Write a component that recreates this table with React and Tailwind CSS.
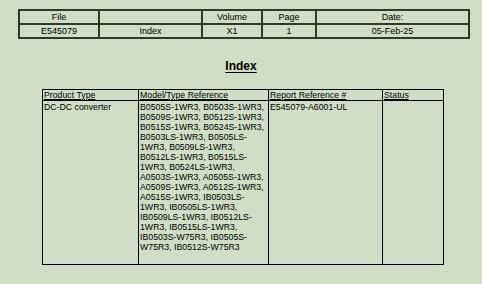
import React from "react";

const models = [
  "B0505S-1WR3", "B0503S-1WR3", "B0509S-1WR3", "B0512S-1WR3", "B0515S-1WR3",
  "B0524S-1WR3", "B0503LS-1WR3", "B0505LS-1WR3", "B0509LS-1WR3", "B0512LS-1WR3",
  "B0515LS-1WR3", "B0524LS-1WR3", "A0503S-1WR3", "A0505S-1WR3", "A0509S-1WR3",
  "A0512S-1WR3", "A0515S-1WR3", "IB0503LS-1WR3", "IB0505LS-1WR3", "IB0509LS-1WR3",
  "IB0512LS-1WR3", "IB0515LS-1WR3", "IB0503S-W75R3", "IB0505S-W75R3", "IB0512S-W75R3",
];

const font = { fontFamily: '"Liberation Sans", Arial, sans-serif' };

export default function App() {
  return (
    <div
      className="w-[482px] h-[284px] bg-[#cfdec4] text-black overflow-hidden pt-[9px]"
      style={font}
    >
      {/* Header block */}
      <table className="ml-[18px] w-[450px] table-fixed border-collapse text-[9px] leading-[12px] text-center">
        <colgroup>
          <col className="w-[80px]" />
          <col className="w-[103px]" />
          <col className="w-[60px]" />
          <col className="w-[54px]" />
          <col className="w-[153px]" />
        </colgroup>
        <tbody>
          <tr className="h-[14px]">
            <td className="border-2 border-[#2f3a2c] p-0">File</td>
            <td className="border-2 border-[#2f3a2c] p-0"></td>
            <td className="border-2 border-[#2f3a2c] p-0">Volume</td>
            <td className="border-2 border-[#2f3a2c] p-0">Page</td>
            <td className="border-2 border-[#2f3a2c] p-0">Date:</td>
          </tr>
          <tr className="h-[14px]">
            <td className="border-2 border-[#2f3a2c] p-0">E545079</td>
            <td className="border-2 border-[#2f3a2c] p-0">Index</td>
            <td className="border-2 border-[#2f3a2c] p-0">X1</td>
            <td className="border-2 border-[#2f3a2c] p-0">1</td>
            <td className="border-2 border-[#2f3a2c] p-0">05-Feb-25</td>
          </tr>
        </tbody>
      </table>

      <div className="mt-[20px] text-center text-[12px] leading-[14px] font-bold underline underline-offset-2">
        Index
      </div>

      {/* Index table */}
      <table className="mt-[16px] ml-[42px] w-[401px] table-fixed border-collapse text-[8.75px] leading-[10px] text-left align-top">
        <colgroup>
          <col className="w-[96px]" />
          <col className="w-[130px]" />
          <col className="w-[114px]" />
          <col className="w-[61px]" />
        </colgroup>
        <thead>
          <tr className="h-[11px]">
            <th className="border-[1.5px] border-black font-normal underline px-px py-0">Product Type</th>
            <th className="border-[1.5px] border-black font-normal underline px-px py-0">Model/Type Reference</th>
            <th className="border-[1.5px] border-black font-normal underline px-px py-0">Report Reference #</th>
            <th className="border-[1.5px] border-black font-normal underline px-px py-0">Status</th>
          </tr>
        </thead>
        <tbody>
          <tr className="h-[164px]">
            <td className="border-[1.5px] border-black align-top px-px pt-px">DC-DC converter</td>
            <td className="border-[1.5px] border-black align-top px-px pt-px">{models.join(", ")}</td>
            <td className="border-[1.5px] border-black align-top px-px pt-px">E545079-A6001-UL</td>
            <td className="border-[1.5px] border-black align-top px-px pt-px"></td>
          </tr>
        </tbody>
      </table>
    </div>
  );
}
